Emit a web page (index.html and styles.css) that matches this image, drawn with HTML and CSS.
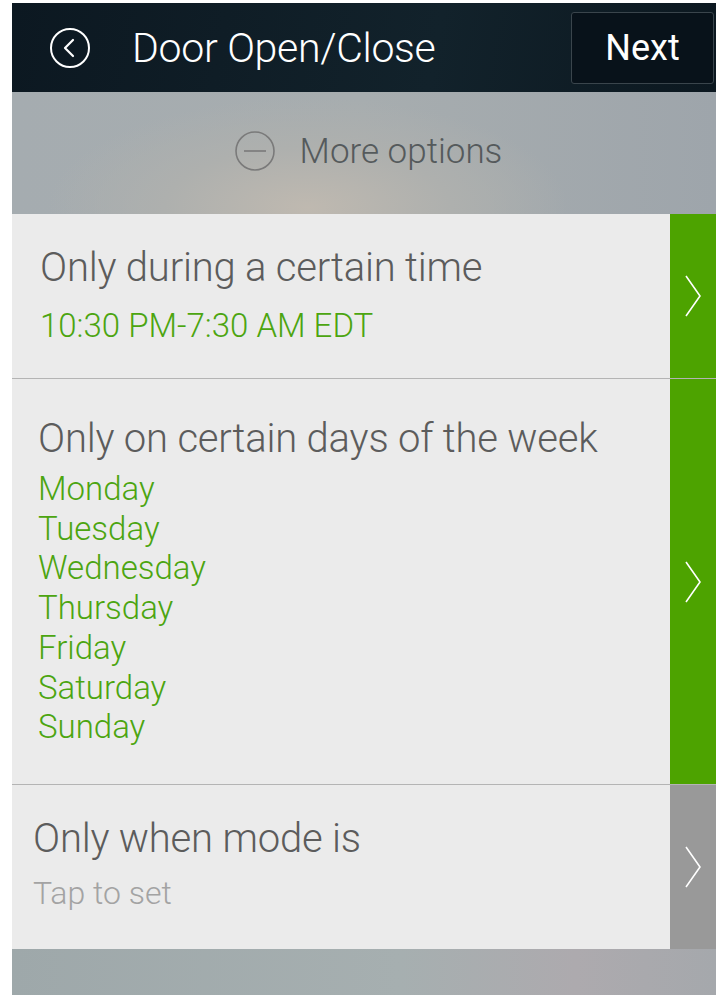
FILE: index.html
```html
<!DOCTYPE html>
<html>
<head>
<meta charset="utf-8">
<link rel="stylesheet" href="styles.css">
</head>
<body>
<div class="screen">
  <header class="topbar">
    <div class="back">
      <svg width="42" height="42" viewBox="0 0 42 42"><circle cx="21" cy="21" r="19" fill="none" stroke="#fff" stroke-width="2"/><path d="M24 13 L16 21 L24 29" fill="none" stroke="#fff" stroke-width="2.2" stroke-linecap="round" stroke-linejoin="round"/></svg>
    </div>
    <div class="title">Door Open/Close</div>
    <div class="next">Next</div>
  </header>
  <div class="more">
    <svg width="42" height="42" viewBox="0 0 42 42"><circle cx="21" cy="21" r="19" fill="none" stroke="#7a7a7a" stroke-width="1.6"/><path d="M10 21 H32" stroke="#7a7a7a" stroke-width="1.6"/></svg>
    <span>More options</span>
  </div>
  <div class="row row1">
    <div class="body">
      <div class="rtitle">Only during a certain time</div>
      <div class="sub green">10:30 PM-7:30 AM EDT</div>
    </div>
    <div class="side on"><svg width="18" height="44" viewBox="0 0 18 44"><path d="M2 2 L16 22 L2 42" fill="none" stroke="#fff" stroke-width="1.6"/></svg></div>
  </div>
  <div class="row row2">
    <div class="body">
      <div class="rtitle">Only on certain days of the week</div>
      <div class="days green">
        <div>Monday</div><div>Tuesday</div><div>Wednesday</div><div>Thursday</div><div>Friday</div><div>Saturday</div><div>Sunday</div>
      </div>
    </div>
    <div class="side on"><svg width="18" height="44" viewBox="0 0 18 44"><path d="M2 2 L16 22 L2 42" fill="none" stroke="#fff" stroke-width="1.6"/></svg></div>
  </div>
  <div class="row row3">
    <div class="body">
      <div class="rtitle">Only when mode is</div>
      <div class="sub grey">Tap to set</div>
    </div>
    <div class="side off"><svg width="18" height="44" viewBox="0 0 18 44"><path d="M2 2 L16 22 L2 42" fill="none" stroke="#fff" stroke-width="1.6"/></svg></div>
  </div>
  <div class="foot"></div>
</div>
</body>
</html>
```
FILE: styles.css
```css
html, body {
  margin: 0;
  padding: 0;
  background: #fff;
}
body {
  font-family: Roboto, "Liberation Sans", sans-serif;
  font-weight: 300;
}
.screen {
  width: 704px;
  margin: 3px 0 0 12px;
  display: flex;
  flex-direction: column;
}
.topbar {
  height: 89px;
  background: linear-gradient(100deg, #0c1821 0%, #12222b 60%, #0c1820 100%);
  display: flex;
  align-items: center;
  padding: 0 2px 0 37px;
  box-sizing: border-box;
}
.back {
  width: 42px;
  height: 42px;
  display: flex;
}
.title {
  color: #fff;
  font-size: 41px;
  margin-left: 41px;
  flex: 1;
  letter-spacing: -0.3px;
}
.next {
  width: 143px;
  height: 72px;
  box-sizing: border-box;
  border: 1.5px solid #3a454c;
  border-radius: 3px;
  background: #08121a;
  color: #fff;
  font-size: 36px;
  font-weight: 400;
  display: flex;
  align-items: center;
  justify-content: center;
}
.more {
  height: 122px;
  background: radial-gradient(ellipse 260px 110px at 42% 95%, #bfb9b0 0%, #aeb0ae 55%, rgba(166,171,174,0) 100%), linear-gradient(90deg, #a5acb0 0%, #a7adaf 50%, #9ea5ab 100%);
  display: flex;
  align-items: center;
  justify-content: center;
  gap: 24px;
  padding-left: 8px;
  padding-bottom: 4px;
  box-sizing: border-box;
}
.more span {
  color: #555a5c;
  font-size: 35px;
}
.row {
  display: flex;
  background: #ebebeb;
  border-bottom: 1px solid #b4b4b4;
}
.row1 { height: 164px; }
.row2 { height: 405px; }
.row3 { height: 164px; border-bottom: none; }
.body {
  flex: 1;
  padding-left: 28px;
  box-sizing: border-box;
}
.row1 .body { padding-top: 32px; }
.row2 .body { padding-top: 38px; padding-left: 26px; }
.row3 .body { padding-top: 32px; padding-left: 21px; }
.rtitle {
  color: #5c5c5c;
  font-size: 40px;
  line-height: 44px;
  letter-spacing: -0.2px;
}
.sub {
  font-size: 33px;
  line-height: 40px;
  margin-top: 16px;
}
.row3 .sub { font-size: 32px; margin-top: 12px; }
.green { color: #4ca510; }
.grey { color: #a3a3a3; }
.days {
  font-size: 33px;
  line-height: 39.7px;
  margin-top: 8px;
}
.side {
  width: 46px;
  display: flex;
  align-items: center;
  justify-content: center;
}
.on { background: #4da300; }
.off { background: #999999; }
.foot {
  height: 46px;
  background: linear-gradient(90deg, #9ea8aa 0%, #a6afb0 55%, #adaaae 80%, #a5a8ac 100%);
}
```
